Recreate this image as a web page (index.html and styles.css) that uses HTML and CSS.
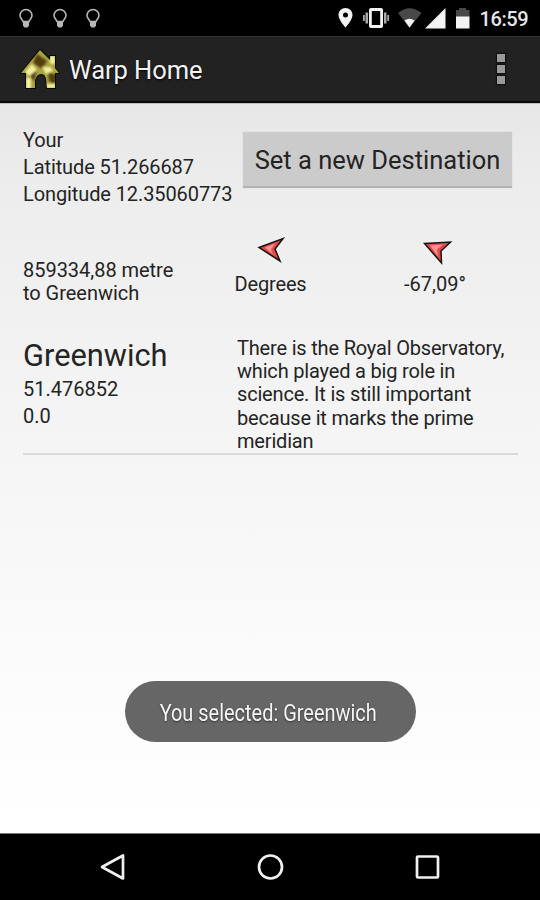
FILE: index.html
```html
<!DOCTYPE html>
<html lang="en">
<head>
<meta charset="utf-8">
<title>Warp Home</title>
<link rel="stylesheet" href="styles.css">
</head>
<body>
<div class="phone">
  <header class="status">
    <svg class="bulb" viewBox="0 0 16 22"><path d="M5 14.5C4 12 2 11 2 8.500a6 6 0 0 1 12 0C14 11 12 12 11 14.500Z"/><path class="base" d="M5 14.500h6v4L9.500 20.500h-3L5 18.500Z"/></svg>
    <svg class="bulb" viewBox="0 0 16 22"><path d="M5 14.5C4 12 2 11 2 8.500a6 6 0 0 1 12 0C14 11 12 12 11 14.500Z"/><path class="base" d="M5 14.500h6v4L9.500 20.500h-3L5 18.500Z"/></svg>
    <svg class="bulb" viewBox="0 0 16 22"><path d="M5 14.5C4 12 2 11 2 8.500a6 6 0 0 1 12 0C14 11 12 12 11 14.500Z"/><path class="base" d="M5 14.500h6v4L9.500 20.500h-3L5 18.500Z"/></svg>
    <svg class="system" viewBox="0 0 134 22">
      <path fill-rule="evenodd" d="M7.500 1C3.500 1 .5 4 .5 8c0 5 7 12.500 7 12.500s7-7.500 7-12.500c0-4-3-7-7-7Zm0 4.500a2.500 2.500 0 1 1 0 5 2.500 2.500 0 0 1 0-5Z"/>
      <path fill-rule="evenodd" d="M33 1h10q2 0 2 2v16q0 2-2 2H33q-2 0-2-2V3q0-2 2-2Zm.8 3v14h8.400V4Z"/>
      <path class="dim" d="M27.500 5.500h2.500v11h-2.500zM25 8h1.800v6H25zM46 5.500h2.500v11H46zM49.300 8h1.800v6h-1.800z"/>
      <path class="dark" d="M60 6Q71.500-3.500 83.500 6L71.500 21Z"/><path d="M66.500 13.500q5-3.500 10 0l-5 7Z"/>
      <path d="M107.500 1v20.500H87Z"/>
      <path class="dark" d="M118 3h3V1h7v2h3.500v7H118Z"/><path d="M118 9.500h13.500v12H118Z"/>
    </svg>
    <span class="clock">16:59</span>
  </header>
  <div class="appbar">
    <svg class="house" viewBox="0 0 40 40">
      <defs>
        <filter id="patches" x="0" y="0" width="1" height="1"><feGaussianBlur stdDeviation="1.300"/></filter>
        <clipPath id="outline"><path d="M20 1 30 11V7h5v12l4 5h-4v15h-8l-1-9q-1-5-5-5-4 0-6 6v8H6V24H1Z"/></clipPath>
      </defs>
      <path class="edge" d="M20 1 30 11V7h5v12l4 5h-4v15h-8l-1-9q-1-5-5-5-4 0-6 6v8H6V24H1Z"/>
      <g clip-path="url(#outline)"><path fill="#aaa13f" d="M0 0h40v40H0z"/>
        <g filter="url(#patches)"><path fill="#51400f" d="m17 5 10 7-5 8-9-6ZM28 23l9 3-2 10-6-4ZM11 24l6-3-3 11-3-2Z"/><path fill="#f3f0a0" d="m5 23 7-8 5 6-8 6ZM6 29h5v11H6zM30 7h5v8h-5zM22 18h9l2 4-7 3ZM26 35h10v4H26z"/></g>
      </g>
    </svg>
    <h1>Warp Home</h1>
    <div class="overflow"><i></i><i></i><i></i></div>
  </div>
  <main>
    <section class="position">
      <p>Your<br>Latitude 51.266687<br>Longitude 12.35060773</p>
      <button>Set a new Destination</button>
    </section>
    <section class="bearing">
      <p>859334,88 metre<br>to Greenwich</p>
      <div class="heading"><svg class="arrow" viewBox="0 0 50 40"><path d="M13 15.500 37 6.500 29 17 34 29Z"/><path class="shine" d="m19 15.500 10-4-4 6 2 5Z"/></svg><span>Degrees</span></div>
      <div class="heading angle"><svg class="arrow" viewBox="0 0 50 40"><path d="M8.500 11.500 34.500 10 25 19 25.500 31Z"/><path class="shine" d="m14 13.500 13-1-6 5 1 7Z"/></svg><span>-67,09°</span></div>
    </section>
    <section class="place">
      <div><h2>Greenwich</h2><p class="coords">51.476852<br>0.0</p></div>
      <p class="about">There is the Royal Observatory,<br>which played a big role in<br>science. It is still important<br>because it marks the prime<br>meridian</p>
    </section>
    <div class="toast"><span>You selected: Greenwich</span></div>
  </main>
  <nav>
    <svg viewBox="0 0 30 30"><path d="M4 15 25 3.500v23Z"/></svg>
    <svg viewBox="0 0 30 30"><circle cx="15.500" cy="15" r="11.500"/></svg>
    <svg viewBox="0 0 30 30"><rect x="5" y="4.500" width="21" height="21" rx="1"/></svg>
  </nav>
</div>
</body>
</html>
```
FILE: styles.css
```css
* { box-sizing: border-box; }
body { margin: 0; font-family: Roboto, "Liberation Sans", sans-serif; color: #242424; }
p, h1, h2 { margin: 0; font-weight: 400; }
svg { display: block; flex: none; }
.phone { width: 540px; height: 900px; display: flex; flex-direction: column; overflow: hidden; background: #000; }
.status { height: 36px; display: flex; align-items: flex-start; padding: 7px 0 0 18px; background: #000; }
.bulb { width: 16px; height: 22px; margin-right: 17.6px; fill: none; stroke: #b7b7b7; stroke-width: 1.6; }
.bulb .base { fill: #b7b7b7; stroke: none; }
.system { width: 134px; height: 22px; margin-left: 219.2px; fill: #f3f3f3; }
.system .dark { fill: #484848; }
.system .dim { fill: #aaa; }
.clock { margin: 0 0 0 7.5px; color: #e6e6e6; font-size: 20px; font-weight: 500; line-height: 24px; letter-spacing: -.4px; white-space: nowrap; }
.appbar { height: 67px; display: flex; align-items: center; padding: 0 35px 0 20px; background: #222; border-top: 1px solid #303030; border-bottom: 2px solid #080808; }
.house { width: 40px; height: 40px; }
.house .edge { fill: #a89b3b; stroke: #080803; stroke-width: 2; }
h1 { margin-left: 9px; padding-top: 2px; color: #f3f3f3; font-size: 25.5px; line-height: 30px; letter-spacing: -.05px; text-shadow: 0 1px 2px #000; }
.overflow { margin-left: auto; display: grid; gap: 3px; }
.overflow i { width: 8px; height: 8px; background: #999; box-shadow: 0 0 1px 1px #111; }
main { height: 730px; padding: 23px 22px 0 23px; background: linear-gradient(#e7e7e7, #ededed 12%, #f2f2f2 33%, #fcfcfc 80%, #fff); border-top: 1px solid #bbb; }
.position { display: flex; height: 97px; }
.position p { width: 220px; font-size: 20px; line-height: 26.8px; letter-spacing: -.1px; white-space: nowrap; }
button { width: 269px; height: 56px; margin-top: 5px; padding: 2px 0 0; border: 0; border-radius: 1px; background: #cbcbcb; border-bottom: 2px solid #b1b1b1; box-shadow: 0 0 1px #aaa; color: #242424; font: 25.5px/30px Roboto, sans-serif; white-space: nowrap; }
.bearing { display: grid; grid-template-columns: 211px 73px 1fr; height: 109px; font-size: 20px; }
.bearing p { padding-top: 35px; line-height: 23.4px; letter-spacing: -.03px; white-space: nowrap; }
.heading { display: flex; flex-direction: column; align-items: center; padding-top: 8px; line-height: 24px; letter-spacing: -.15px; white-space: nowrap; }
.arrow { width: 50px; height: 40px; fill: #e3484b; stroke: #171012; stroke-width: 1.5; }
.arrow .shine { fill: #f79292; stroke: none; }
.angle { width: 62px; margin-left: 97px; letter-spacing: 0; }
.angle svg { margin-left: 11px; }
.place { display: grid; grid-template-columns: 214px 1fr; height: 122px; border-bottom: 2px solid #dadada; }
h2 { padding-top: 4px; font-size: 30.8px; line-height: 38px; }
.coords { font-size: 20px; line-height: 26.5px; padding-top: 1px; }
.about { padding-top: 4px; font-size: 20px; line-height: 23.2px; letter-spacing: -.18px; white-space: nowrap; }
.toast { width: 291px; height: 61px; margin: 226px 0 0 102px; padding: 3px 4px 0 0; display: flex; align-items: center; justify-content: center; border-radius: 31px; background: #666; color: #f5f5f5; font-size: 23px; text-shadow: 0 1px 2px #333; white-space: nowrap; }
.toast span { transform: scaleX(.867); }
nav { height: 67px; display: flex; justify-content: space-between; padding: 18px 98px 0; border-top: 1px solid #777; background: #000; }
nav svg { width: 30px; height: 30px; fill: none; stroke: #f0f0f0; stroke-width: 2.7; stroke-linejoin: round; }
```
